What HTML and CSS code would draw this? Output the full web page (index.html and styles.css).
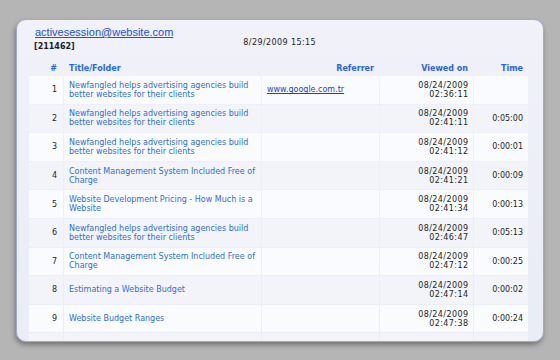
FILE: index.html
```html
<!DOCTYPE html>
<html>
<head>
<meta charset="utf-8">
<link rel="stylesheet" href="styles.css">
</head>
<body>
<div class="card">
  <div class="head">
    <div class="who">
      <a class="email" href="#">activesession@website.com</a>
      <div class="sid">[211462]</div>
    </div>
    <div class="stamp">8/29/2009 15:15</div>
  </div>
  <table class="log">
    <colgroup>
      <col class="c-num"><col class="c-title"><col class="c-ref"><col class="c-view"><col class="c-time">
    </colgroup>
    <thead>
      <tr><th class="num">#</th><th class="title">Title/Folder</th><th class="r">Referrer</th><th class="r">Viewed on</th><th class="r">Time</th></tr>
    </thead>
    <tbody>
      <tr><td class="num">1</td><td class="title"><a href="#">Newfangled helps advertising agencies build better websites for their clients</a></td><td class="ref"><a href="#">www.google.com.tr</a></td><td class="r when">08/24/2009<br>02:36:11</td><td class="r"></td></tr>
      <tr><td class="num">2</td><td class="title"><a href="#">Newfangled helps advertising agencies build better websites for their clients</a></td><td></td><td class="r when">08/24/2009<br>02:41:11</td><td class="r">0:05:00</td></tr>
      <tr><td class="num">3</td><td class="title"><a href="#">Newfangled helps advertising agencies build better websites for their clients</a></td><td></td><td class="r when">08/24/2009<br>02:41:12</td><td class="r">0:00:01</td></tr>
      <tr><td class="num">4</td><td class="title"><a href="#">Content Management System Included Free of Charge</a></td><td></td><td class="r when">08/24/2009<br>02:41:21</td><td class="r">0:00:09</td></tr>
      <tr><td class="num">5</td><td class="title"><a href="#">Website Development Pricing - How Much is a Website</a></td><td></td><td class="r when">08/24/2009<br>02:41:34</td><td class="r">0:00:13</td></tr>
      <tr><td class="num">6</td><td class="title"><a href="#">Newfangled helps advertising agencies build better websites for their clients</a></td><td></td><td class="r when">08/24/2009<br>02:46:47</td><td class="r">0:05:13</td></tr>
      <tr><td class="num">7</td><td class="title"><a href="#">Content Management System Included Free of Charge</a></td><td></td><td class="r when">08/24/2009<br>02:47:12</td><td class="r">0:00:25</td></tr>
      <tr><td class="num">8</td><td class="title"><a href="#">Estimating a Website Budget</a></td><td></td><td class="r when">08/24/2009<br>02:47:14</td><td class="r">0:00:02</td></tr>
      <tr><td class="num">9</td><td class="title"><a href="#">Website Budget Ranges</a></td><td></td><td class="r when">08/24/2009<br>02:47:38</td><td class="r">0:00:24</td></tr>
      <tr><td></td><td></td><td></td><td></td><td></td></tr>
    </tbody>
  </table>
</div>
</body>
</html>
```

FILE: styles.css
```css
html, body {
  margin: 0;
  padding: 0;
  background: #b5b5b5;
  height: 360px;
  overflow: hidden;
}
.card {
  box-sizing: border-box;
  margin: 19px 0 0 16px;
  width: 528px;
  height: 323px;
  border: 1px solid #a2a7d9;
  border-radius: 10px;
  background: linear-gradient(#f0f1f9, #eaecf6);
  box-shadow: -1px 3px 5px rgba(0, 0, 0, 0.35);
  overflow: hidden;
  font-family: "DejaVu Sans", Verdana, sans-serif;
  font-size: 8px;
  color: #1e1e1e;
}
.head {
  display: flex;
  padding: 5px 0 0 18px;
}
.email {
  font-family: "Liberation Sans", Arial, sans-serif;
  font-size: 11px;
  color: #2350e0;
  text-decoration: underline;
  line-height: 15px;
}
.sid {
  font-weight: bold;
  font-size: 8px;
  margin-top: 2px;
  line-height: 10px;
  margin-left: -1px;
}
.stamp {
  margin-left: 70px;
  margin-top: 13px;
  font-size: 8px;
  line-height: 10px;
  letter-spacing: 0.4px;
}
.log {
  margin: 8px 0 0 11px;
  border-collapse: separate;
  border-spacing: 1px 1px;
  table-layout: fixed;
  width: 501px;
}
.c-num { width: 34px; }
.c-title { width: 197px; }
.c-ref { width: 117px; }
.c-view { width: 93px; }
.c-time { width: 54px; }
th {
  color: #2a66dc;
  font-weight: bold;
  font-size: 8px;
  text-align: left;
  height: 14px;
  padding: 0 5px;
  vertical-align: middle;
}
td {
  height: 27.6px;
  box-sizing: border-box;
  padding: 0 4px 0 5px;
  line-height: 9px;
  vertical-align: middle;
  background: #f3f4fa;
}
tbody tr:nth-child(odd) td {
  background: #fafbfe;
}
.num { text-align: right; padding-right: 6px; }
td.title { padding-left: 5px; }
th.title { padding-left: 5px; }
.r { text-align: right; padding-right: 5px; }
.when { letter-spacing: 0.4px; padding-right: 4.6px; }
.title a {
  color: #2f6ed6;
  text-decoration: none;
}
.ref a {
  color: #1a3fd8;
  text-decoration: underline;
}
```
